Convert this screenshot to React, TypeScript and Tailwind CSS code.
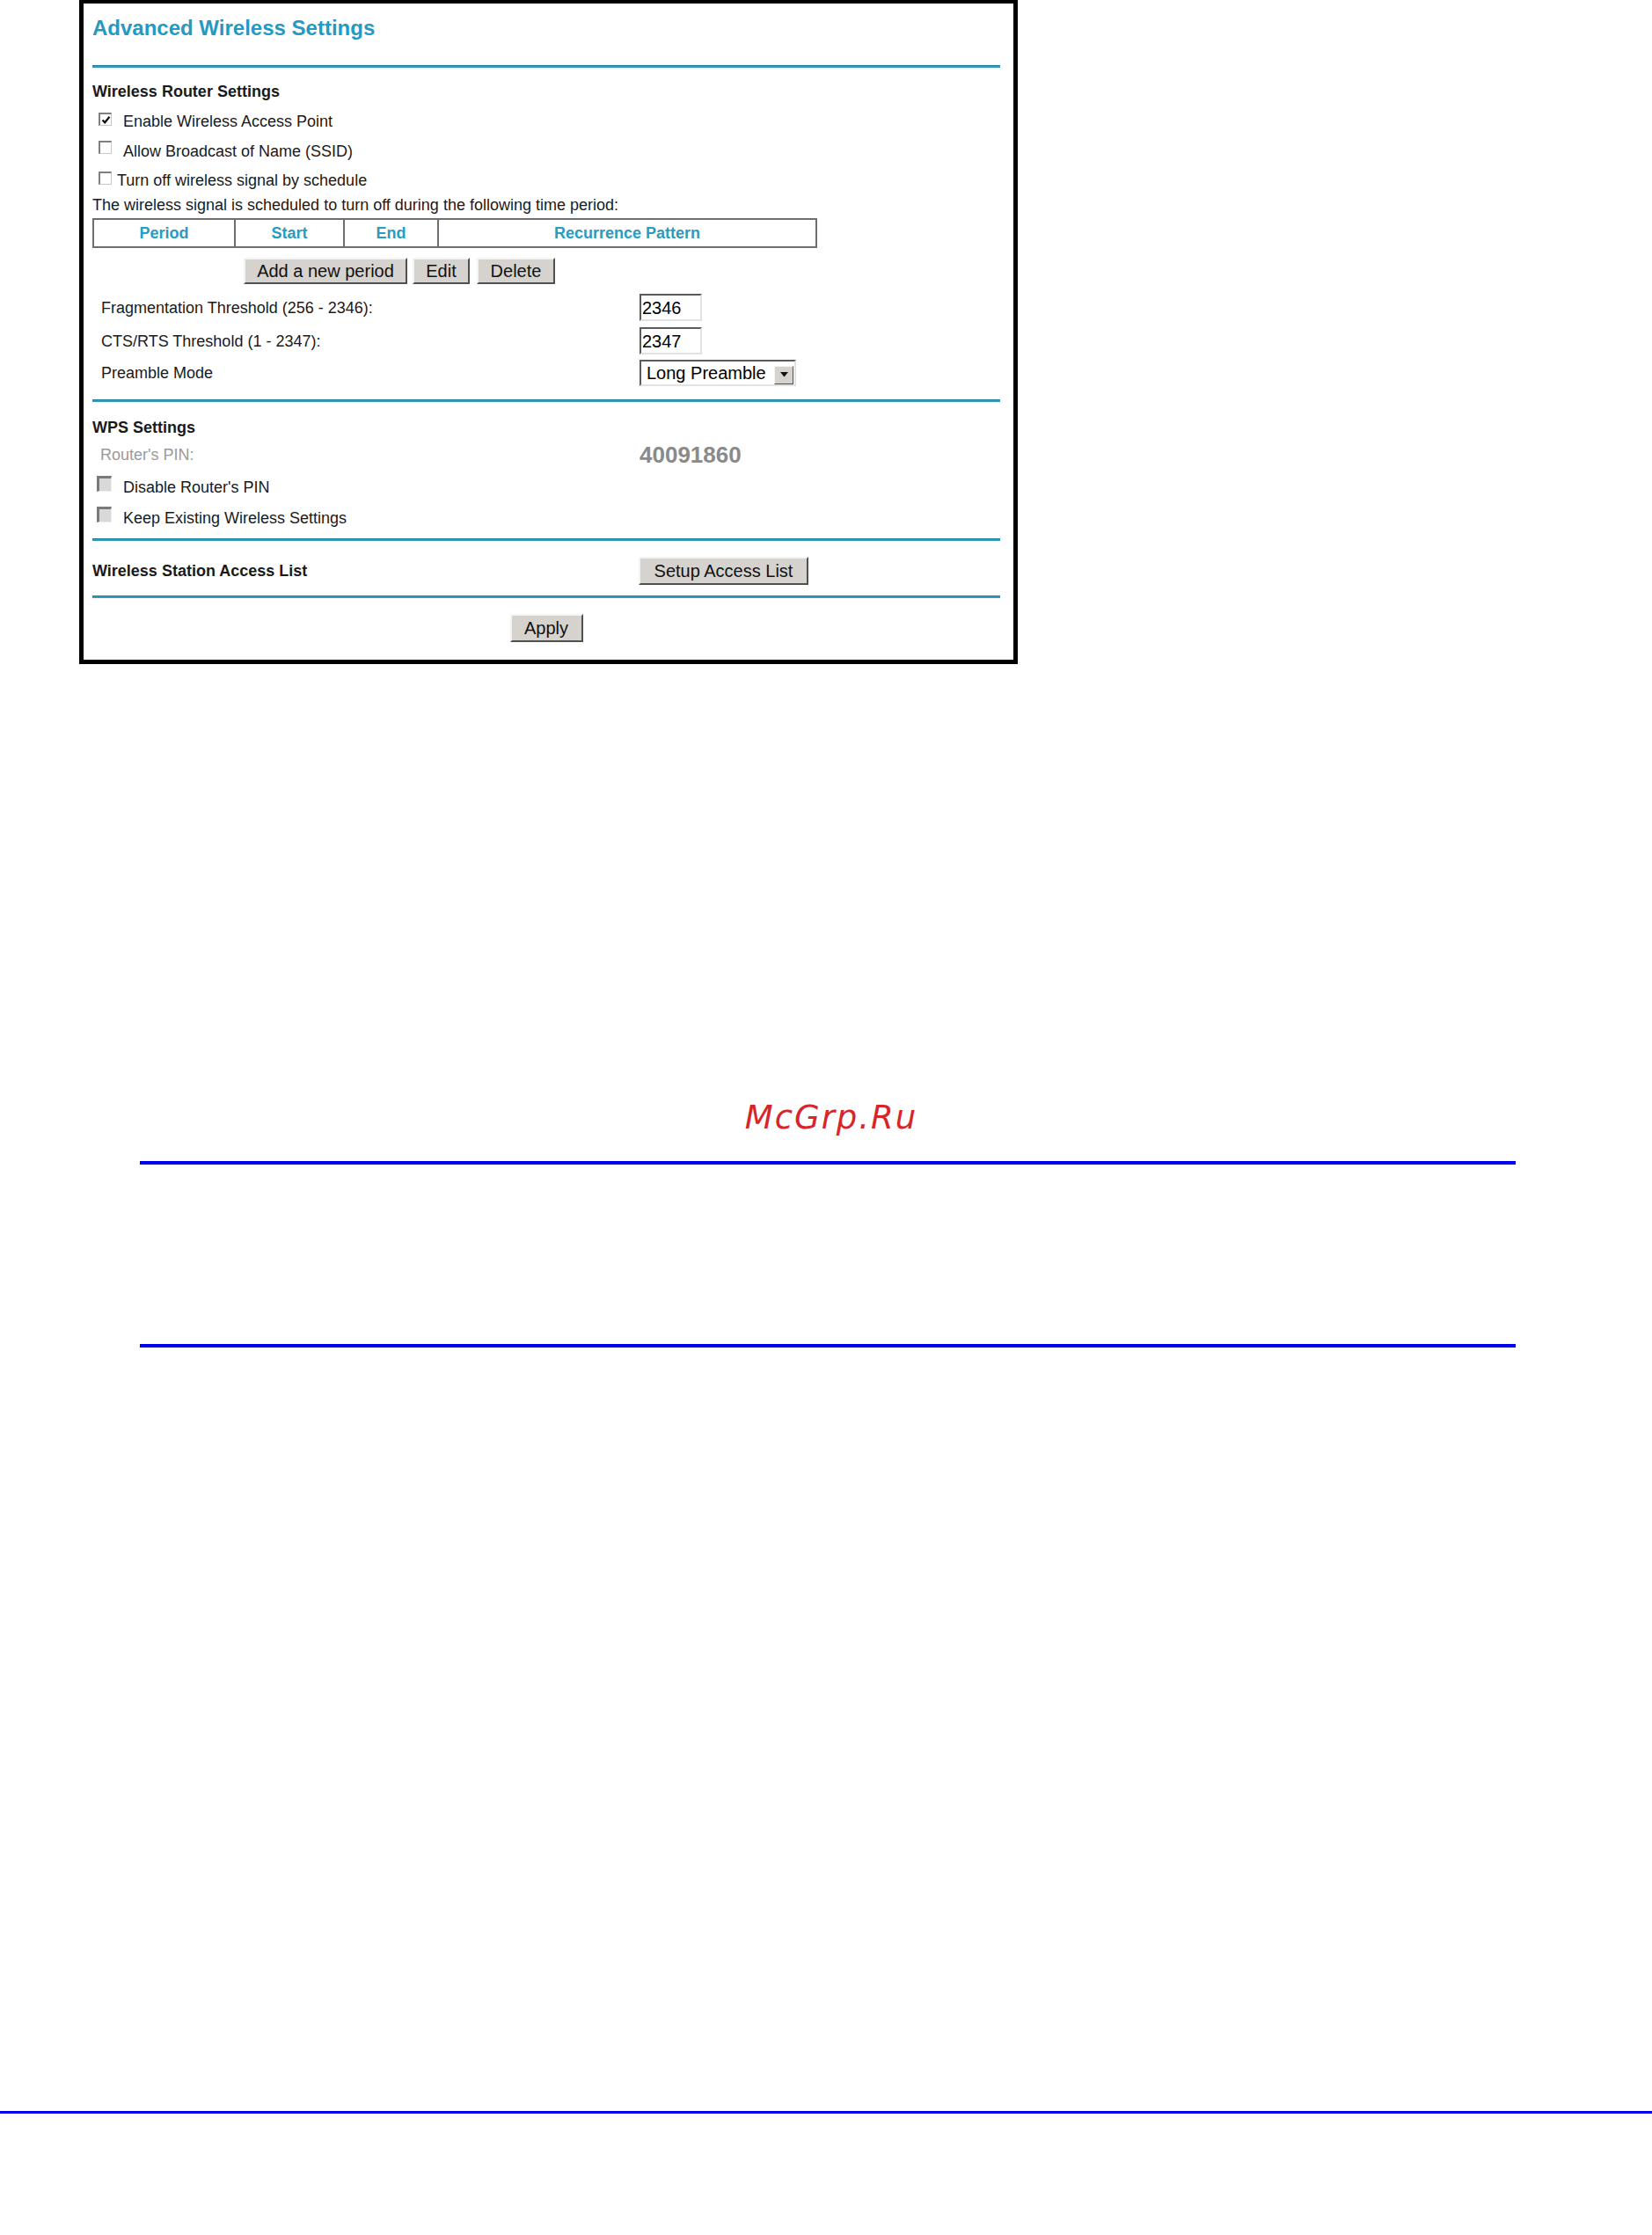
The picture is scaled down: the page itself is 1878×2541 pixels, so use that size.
import React from "react";

const raised =
  "bg-[#d6d3ce] border-2 border-t-[#f4f4f4] border-l-[#f4f4f4] border-r-[#505050] border-b-[#505050] text-[20px] leading-none text-[#111] flex items-center justify-center";

function Check({ on }: { on?: boolean }) {
  return (
    <span className="w-[15px] h-[15px] bg-white border-t-2 border-l-2 border-r border-b border-t-[#808080] border-l-[#808080] border-r-[#c8c8c8] border-b-[#c8c8c8] flex items-center justify-center">
      {on && (
        <svg width="11" height="11" viewBox="0 0 11 11">
          <path d="M1.5 5.5 L4.2 8.3 L9.5 1.8" fill="none" stroke="#111" strokeWidth="2.2" />
        </svg>
      )}
    </span>
  );
}

function GrayCheck() {
  return (
    <span className="block w-[17px] h-[18px] bg-[#d9d9d9] border-t-[3px] border-l-[3px] border-r border-b border-t-[#7a7a7a] border-l-[#7a7a7a] border-r-[#eeeeee] border-b-[#eeeeee]" />
  );
}

function Rule() {
  return <div className="h-[3px] bg-[#2f9cbf] border-t border-[#25809c]" />;
}

function Field({ value }: { value: string }) {
  return (
    <div className="w-[71px] h-full bg-white border-2 border-t-[#5a5a5a] border-l-[#5a5a5a] border-r-[#e2e2e2] border-b-[#e2e2e2] flex items-center pl-[1px] text-[20px] leading-none text-black">
      {value}
    </div>
  );
}

export default function App() {
  return (
    <div className="w-[1878px] h-[2541px] bg-white font-['Liberation_Sans',Arial,sans-serif] text-[#1a1a1a]">
      {/* settings panel */}
      <div className="ml-[90px] w-[1067px] h-[755px] border-[5px] border-t-4 border-black pl-[10px] pr-[15px] flex flex-col">
        <div className="h-[55px] flex items-center text-[24px] font-bold leading-none text-[#2599c2]">
          Advanced Wireless Settings
        </div>
        <div className="mt-[15px]">
          <Rule />
        </div>

        <div className="mt-[17px] h-[20px] flex items-center text-[18px] font-bold leading-none">
          Wireless Router Settings
        </div>
        <div className="mt-[14px] h-[20px] flex items-center pl-[7px] gap-[13px] text-[18px] leading-none">
          <span className="mb-[5px]">
            <Check on />
          </span>
          <span>Enable Wireless Access Point</span>
        </div>
        <div className="mt-[14px] h-[20px] flex items-center pl-[7px] gap-[13px] text-[18px] leading-none">
          <span className="mb-[10px]">
            <Check />
          </span>
          <span>Allow Broadcast of Name (SSID)</span>
        </div>
        <div className="mt-[13px] h-[20px] flex items-center pl-[7px] gap-[6px] text-[18px] leading-none">
          <span className="mb-[5px]">
            <Check />
          </span>
          <span>Turn off wireless signal by schedule</span>
        </div>
        <div className="mt-[8px] h-[20px] flex items-center text-[18px] leading-none">
          The wireless signal is scheduled to turn off during the following time period:
        </div>

        {/* schedule table */}
        <div className="mt-[5px] w-[824px] h-[34px] border-2 border-[#6e6e6e] flex text-[18px] font-bold leading-none text-[#2a9bc1]">
          <div className="w-[159px] flex items-center justify-center">Period</div>
          <div className="w-[124px] border-l-2 border-[#6e6e6e] flex items-center justify-center">Start</div>
          <div className="w-[107px] border-l-2 border-[#6e6e6e] flex items-center justify-center">End</div>
          <div className="flex-1 border-l-2 border-[#6e6e6e] flex items-center justify-center">Recurrence Pattern</div>
        </div>

        <div className="mt-[11px] h-[30px] flex pl-[172px]">
          <div className={raised + " w-[186px]"}>Add a new period</div>
          <div className={raised + " w-[65px] ml-[6px]"}>Edit</div>
          <div className={raised + " w-[89px] ml-[8px]"}>Delete</div>
        </div>

        <div className="mt-[11px] h-[31px] grid grid-cols-[612px_auto] pl-[10px] items-center text-[18px] leading-none">
          <span>Fragmentation Threshold (256 - 2346):</span>
          <Field value="2346" />
        </div>
        <div className="mt-[7px] h-[31px] grid grid-cols-[612px_auto] pl-[10px] items-center text-[18px] leading-none">
          <span>CTS/RTS Threshold (1 - 2347):</span>
          <Field value="2347" />
        </div>
        <div className="mt-[6px] h-[30px] grid grid-cols-[612px_auto] pl-[10px] items-center text-[18px] leading-none">
          <span>Preamble Mode</span>
          <div className="w-[178px] h-full bg-white border-2 border-t-[#5a5a5a] border-l-[#5a5a5a] border-r-[#e2e2e2] border-b-[#e2e2e2] flex items-center justify-between pl-[6px] pr-[1px] text-[20px] text-black">
            <span>Long Preamble</span>
            <span className="w-[22px] h-[21px] mt-[4px] bg-[#d6d3ce] border border-t-[#f4f4f4] border-l-[#f4f4f4] border-r-[#505050] border-b-[#505050] flex items-center justify-center">
              <svg width="9" height="6" viewBox="0 0 9 6">
                <path d="M0 0 H9 L4.5 5.5 Z" fill="#111" />
              </svg>
            </span>
          </div>
        </div>

        <div className="mt-[15px]">
          <Rule />
        </div>

        <div className="mt-[19px] h-[20px] flex items-center text-[18px] font-bold leading-none">WPS Settings</div>
        <div className="mt-[8px] h-[24px] grid grid-cols-[612px_auto] pl-[9px] items-center leading-none">
          <span className="text-[18px] text-[#9a9a9a]">Router's PIN:</span>
          <span className="pl-[1px] text-[26px] font-bold text-[#8a8a8a]">40091860</span>
        </div>
        <div className="mt-[16px] h-[20px] flex items-center pl-[5px] gap-[13px] text-[18px] leading-none">
          <span className="mb-[8px]">
            <GrayCheck />
          </span>
          <span>Disable Router's PIN</span>
        </div>
        <div className="mt-[15px] h-[20px] flex items-center pl-[5px] gap-[13px] text-[18px] leading-none">
          <span className="mb-[8px]">
            <GrayCheck />
          </span>
          <span>Keep Existing Wireless Settings</span>
        </div>

        <div className="mt-[13px]">
          <Rule />
        </div>

        <div className="mt-[18px] h-[32px] grid grid-cols-[621px_auto] items-center text-[18px] leading-none">
          <span className="font-bold">Wireless Station Access List</span>
          <div className={raised + " w-[193px] h-[32px]"}>Setup Access List</div>
        </div>

        <div className="mt-[12px]">
          <Rule />
        </div>

        <div className="mt-[18px] flex justify-center">
          <div className={raised + " w-[83px] h-[32px]"}>Apply</div>
        </div>
      </div>

      {/* watermark */}
      <div className="mt-[497px] h-[37px] flex justify-center pl-[12px]">
        <span className="font-['DejaVu_Sans',sans-serif] italic text-[37px] leading-none tracking-[2px] text-[#d6262b]">
          McGrp.Ru
        </span>
      </div>

      <div className="mt-[31px] ml-[159px] w-[1564px] h-[4px] bg-[#0000ee]" />
      <div className="mt-[204px] ml-[159px] w-[1564px] h-[4px] bg-[#0000ee]" />
      <div className="mt-[868px] h-[3px] bg-[#0000ee]" />
    </div>
  );
}
